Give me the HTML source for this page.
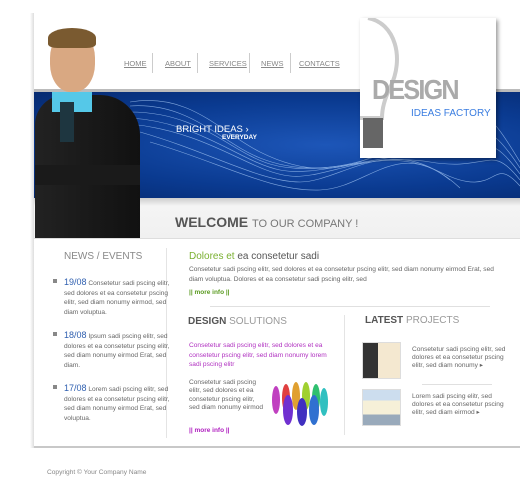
<!DOCTYPE html>
<html><head><meta charset="utf-8"><style>
*{margin:0;padding:0;box-sizing:border-box}
body{width:520px;height:496px;background:#fff;position:relative;overflow:hidden;font-family:"Liberation Sans",sans-serif;}
.a{position:absolute}
.s{font-size:6.6px;color:#666;line-height:9.5px}
.h{font-family:"Liberation Sans Narrow","Liberation Sans",sans-serif}
.nav{font-size:7.5px;color:#888;top:59px;text-decoration:underline;}
.sep{top:53px;width:1px;height:20px;background:#ccc}
</style></head><body>
<div class="a" style="left:30px;top:13px;width:4px;height:435px;background:linear-gradient(90deg,#fff,#ddd)"></div>
<div class="a" style="left:34px;top:89px;width:486px;height:3px;background:#bbb"></div>
<div class="a" style="left:34px;top:92px;width:486px;height:106px;background:radial-gradient(ellipse at 60% 50%,#1d56b8,#0a3a90 60%,#062a70)"></div>
<svg class="a" style="left:130px;top:92px" width="390" height="106">
<g fill="none" stroke="#9cc0f0" stroke-width="0.6" opacity="0.8">
<path d="M0 10 C60 0 90 40 130 60 S220 90 280 40 S360 20 390 70"/>
<path d="M0 14 C60 10 90 50 130 66 S220 80 280 50 S360 30 390 76"/>
<path d="M0 20 C70 20 100 60 140 72 S230 70 290 60 S360 40 390 82"/>
<path d="M0 26 C70 30 110 70 150 78 S240 60 300 70 S360 50 390 88"/>
<path d="M0 32 C80 40 120 80 160 84 S250 50 310 80 S360 60 390 94"/>
<path d="M10 40 C80 60 130 90 170 90 S260 40 320 88"/>
<path d="M20 50 C90 70 140 100 190 98 S270 40 330 96"/>
</g></svg>
<div class="a" style="left:34px;top:198px;width:486px;height:40px;background:linear-gradient(#ccc,#f4f4f4 20%,#f0f0f0)"></div>
<div class="a" style="left:34px;top:238px;width:486px;height:1px;background:#ddd"></div>
<div class="a h" style="left:175px;top:214px;font-size:14px;color:#555"><b>WELCOME</b> <span style="font-size:11px;color:#777">TO OUR COMPANY !</span></div>
<div class="a" style="left:176px;top:124px;font-size:9.5px;color:#fff">BRIGHT IDEAS ›</div>
<div class="a" style="left:222px;top:134px;font-size:6.5px;color:#fff;font-weight:bold">EVERYDAY</div>
<div class="a nav" style="left:124px">HOME</div><div class="a sep" style="left:152px"></div>
<div class="a nav" style="left:165px">ABOUT</div><div class="a sep" style="left:197px"></div>
<div class="a nav" style="left:209px">SERVICES</div><div class="a sep" style="left:249px"></div>
<div class="a nav" style="left:261px">NEWS</div><div class="a sep" style="left:290px"></div>
<div class="a nav" style="left:299px">CONTACTS</div>
<div class="a" style="left:360px;top:18px;width:136px;height:140px;background:#fff;box-shadow:2px 2px 4px rgba(0,0,0,.4)"></div>
<svg class="a" style="left:360px;top:18px" width="60" height="135"><path d="M8 0 C35 5 45 40 30 70 C25 80 22 90 22 100 L0 100" fill="none" stroke="#ccc" stroke-width="4"/><rect x="3" y="100" width="20" height="30" fill="#666"/></svg>
<div class="a h" style="left:372px;top:74px;font-size:28px;font-weight:bold;color:#aaa;letter-spacing:-2px;transform:scaleX(0.9);transform-origin:left">DESIGN</div>
<div class="a h" style="left:411px;top:108px;font-size:10px;color:#3a7de0">IDEAS FACTORY</div>
<div class="a" style="left:35px;top:95px;width:105px;height:143px;background:linear-gradient(90deg,#222,#111);border-radius:30px 40px 0 0"></div>
<div class="a" style="left:50px;top:30px;width:45px;height:62px;background:#d9a882;border-radius:45%"></div>
<div class="a" style="left:48px;top:28px;width:48px;height:20px;background:#7a5a30;border-radius:50% 50% 20% 20%"></div>
<div class="a" style="left:52px;top:92px;width:40px;height:20px;background:#55c8e8"></div>
<div class="a" style="left:60px;top:102px;width:14px;height:40px;background:#1e3640"></div>
<div class="a" style="left:35px;top:165px;width:105px;height:20px;background:#1a1a1a"></div>
<div class="a h" style="left:64px;top:251px;font-size:10px;color:#888">NEWS / EVENTS</div>
<div class="a" style="left:166px;top:248px;width:1px;height:190px;background:#e4e4e4"></div>
<div class="a s" style="left:64px;top:278px;width:110px"><span style="position:absolute;left:-11px;top:1px;width:4px;height:4px;background:#888"></span><span style="color:#3060b0;font-size:9px">19/08</span> Consetetur sadi pscing elitr, sed dolores et ea consetetur pscing elitr, sed diam nonumy eirmod, sed diam voluptua.</div>
<div class="a s" style="left:64px;top:331px;width:110px"><span style="position:absolute;left:-11px;top:1px;width:4px;height:4px;background:#888"></span><span style="color:#3060b0;font-size:9px">18/08</span> Ipsum sadi pscing elitr, sed dolores et ea consetetur pscing elitr, sed diam nonumy eirmod Erat, sed diam.</div>
<div class="a s" style="left:64px;top:384px;width:110px"><span style="position:absolute;left:-11px;top:1px;width:4px;height:4px;background:#888"></span><span style="color:#3060b0;font-size:9px">17/08</span> Lorem sadi pscing elitr, sed dolores et ea consetetur pscing elitr, sed diam nonumy eirmod Erat, sed voluptua.</div>
<div class="a" style="left:189px;top:251px;font-size:10px;color:#555"><span style="color:#7ab030">Dolores et</span> ea consetetur sadi</div>
<div class="a s" style="left:189px;top:265px;width:320px">Consetetur sadi pscing elitr, sed dolores et ea consetetur pscing elitr, sed diam nonumy eirmod Erat, sed diam voluptua. Dolores et ea consetetur sadi pscing elitr, sed</div>
<div class="a" style="left:189px;top:289px;font-size:6.5px;font-weight:bold;color:#5a9a20">|| more info ||</div>
<div class="a" style="left:210px;top:306px;width:280px;height:1px;background:#e0e0e0"></div>
<div class="a h" style="left:188px;top:316px;font-size:10px;color:#555"><b>DESIGN</b> <span style="color:#999">SOLUTIONS</span></div>
<div class="a" style="left:344px;top:315px;width:1px;height:120px;background:#e4e4e4"></div>
<div class="a h" style="left:365px;top:315px;font-size:10px;color:#555"><b>LATEST</b> <span style="color:#999">PROJECTS</span></div>
<div class="a s" style="left:189px;top:341px;width:150px;color:#b030c0">Consetetur sadi pscing elitr, sed dolores et ea consetetur pscing elitr, sed diam nonumy lorem sadi pscing elitr</div>
<div class="a s" style="left:189px;top:379px;width:75px;line-height:8.3px">Consetetur sadi pscing elitr, sed dolores et ea consetetur pscing elitr, sed diam nonumy eirmod</div>
<svg class="a" style="left:266px;top:378px" width="68" height="48"><g><ellipse cx="10" cy="22" rx="4" ry="14" fill="#c040c0"/><ellipse cx="20" cy="20" rx="4" ry="14" fill="#e04040"/><ellipse cx="30" cy="18" rx="4" ry="14" fill="#e0a030"/><ellipse cx="40" cy="18" rx="4" ry="14" fill="#a0d030"/><ellipse cx="50" cy="20" rx="4" ry="14" fill="#30c070"/><ellipse cx="58" cy="24" rx="4" ry="14" fill="#30c0c0"/><ellipse cx="22" cy="32" rx="5" ry="15" fill="#7030d0"/><ellipse cx="36" cy="34" rx="5" ry="14" fill="#4030c0"/><ellipse cx="48" cy="32" rx="5" ry="15" fill="#3070d0"/></g></svg>
<div class="a" style="left:189px;top:427px;font-size:6.5px;font-weight:bold;color:#b020c0">|| more info ||</div>
<div class="a" style="left:362px;top:342px;width:39px;height:37px;border:1px solid #ddd;background:linear-gradient(90deg,#333 40%,#f4e8d0 40%)"></div>
<div class="a s" style="left:412px;top:346px;width:95px;line-height:8px">Consetetur sadi pscing elitr, sed dolores et ea consetetur pscing elitr, sed diam nonumy ▸</div>
<div class="a" style="left:422px;top:384px;width:70px;height:1px;background:#e0e0e0"></div>
<div class="a" style="left:362px;top:389px;width:39px;height:37px;border:1px solid #ddd;background:linear-gradient(#cde 30%,#f6f0d8 30%,#f6f0d8 70%,#9ab 70%)"></div>
<div class="a s" style="left:412px;top:393px;width:95px;line-height:8px">Lorem sadi pscing elitr, sed dolores et ea consetetur pscing elitr, sed diam eirmod ▸</div>
<div class="a" style="left:34px;top:446px;width:486px;height:2px;background:#c8c8c8"></div>
<div class="a s" style="left:47px;top:468px;color:#888">Copyright © Your Company Name</div>
</body></html>
